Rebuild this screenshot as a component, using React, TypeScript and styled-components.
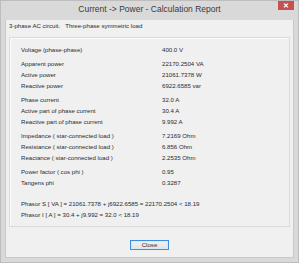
import React from "react";
import styled, { createGlobalStyle } from "styled-components";

const GlobalStyle = createGlobalStyle`
  html, body {
    margin: 0;
    padding: 0;
    background: #d6d6d6;
  }
  body {
    font-family: "Liberation Sans", Arial, sans-serif;
  }
`;

// whole dialog frame
const Window = styled.div`
  box-sizing: border-box;
  width: 299px;
  height: 263px;
  background: #d9d9d9;
  border: 1px solid #bdbdbd;
  display: flex;
  flex-direction: column;
`;

const TitleBar = styled.div`
  height: 19px;
  display: grid;
  grid-template-columns: 1fr auto 1fr;
  align-items: start;
`;

const Title = styled.div`
  grid-column: 2;
  font-size: 8.5px;
  line-height: 9px;
  margin-top: 4px;
  color: #3a3a3a;
  white-space: nowrap;
`;

const CloseX = styled.div`
  grid-column: 3;
  justify-self: end;
  width: 16px;
  height: 9px;
  margin-right: 4px;
  background: #c75050;
  color: #fff;
  font-size: 7px;
  font-weight: bold;
  line-height: 9px;
  text-align: center;
`;

const Client = styled.div`
  flex: 1;
  margin: 0 4px 4px 4px;
  background: #f0f0f0;
  border: 1px solid #c9c9c9;
  border-top: none;
  padding: 2px 3px 0 3px;
  display: flex;
  flex-direction: column;
  color: #2b2b2b;
  font-size: 6.1px;
`;

const Header = styled.div`
  line-height: 8px;
  white-space: nowrap;
  > span + span {
    margin-left: 5px;
  }
`;

const Panel = styled.div`
  margin-top: 7px;
  height: 190px;
  box-sizing: border-box;
  border: 1px solid #dadada;
  box-shadow: inset 1px 1px 0 #fbfbfb;
  padding: 7px 0 0 11px;
`;

const Group = styled.div<{ gap: number }>`
  margin-top: ${(p) => p.gap}px;
`;

const Row = styled.div`
  display: grid;
  grid-template-columns: 141px 1fr;
  line-height: 10.8px;
  white-space: nowrap;
`;

const Line = styled.div`
  line-height: 10.8px;
  white-space: nowrap;
`;

const Footer = styled.div`
  display: flex;
  justify-content: center;
  margin-top: 13px;
`;

const Button = styled.button`
  box-sizing: border-box;
  width: 39px;
  height: 10px;
  padding: 0;
  border: 1px solid #3c8fe0;
  background: linear-gradient(#f2f2f2, #e3e3e3);
  box-shadow: inset 0 0 0 1px #d8e8f8;
  font-family: "Liberation Sans", Arial, sans-serif;
  font-size: 6.1px;
  line-height: 8px;
  color: #2b2b2b;
`;

const groups: [string, string][][] = [
  [["Voltage (phase-phase)", "400.0 V"]],
  [
    ["Apparent power", "22170.2504 VA"],
    ["Active power", "21061.7378 W"],
    ["Reactive power", "6922.6585 var"],
  ],
  [
    ["Phase current", "32.0 A"],
    ["Active part of phase current", "30.4 A"],
    ["Reactive part of phase current", "9.992 A"],
  ],
  [
    ["Impedance ( star-connected load )", "7.2169 Ohm"],
    ["Resistance ( star-connected load )", "6.856 Ohm"],
    ["Reactance ( star-connected load )", "2.2535 Ohm"],
  ],
  [
    ["Power factor ( cos phi )", "0.95"],
    ["Tangens phi", "0.3287"],
  ],
];

export default function App() {
  return (
    <>
      <GlobalStyle />
      <Window>
        <TitleBar>
          <Title>Current -&gt; Power - Calculation Report</Title>
          <CloseX>✕</CloseX>
        </TitleBar>
        <Client>
          <Header>
            <span>3-phase AC circuit.</span>
            <span>Three-phase symmetric load</span>
          </Header>
          <Panel>
            {groups.map((rows, i) => (
              <Group key={i} gap={i === 0 ? 0 : 3.6}>
                {rows.map(([label, value]) => (
                  <Row key={label}>
                    <span>{label}</span>
                    <span>{value}</span>
                  </Row>
                ))}
              </Group>
            ))}
            <Group gap={10.2}>
              <Line>Phasor S [ VA ] = 21061.7378 + j6922.6585 = 22170.2504 &lt; 18.19</Line>
              <Line>Phasor I [ A ] = 30.4 + j9.992 = 32.0 &lt; 18.19</Line>
            </Group>
          </Panel>
          <Footer>
            <Button>Close</Button>
          </Footer>
        </Client>
      </Window>
    </>
  );
}
